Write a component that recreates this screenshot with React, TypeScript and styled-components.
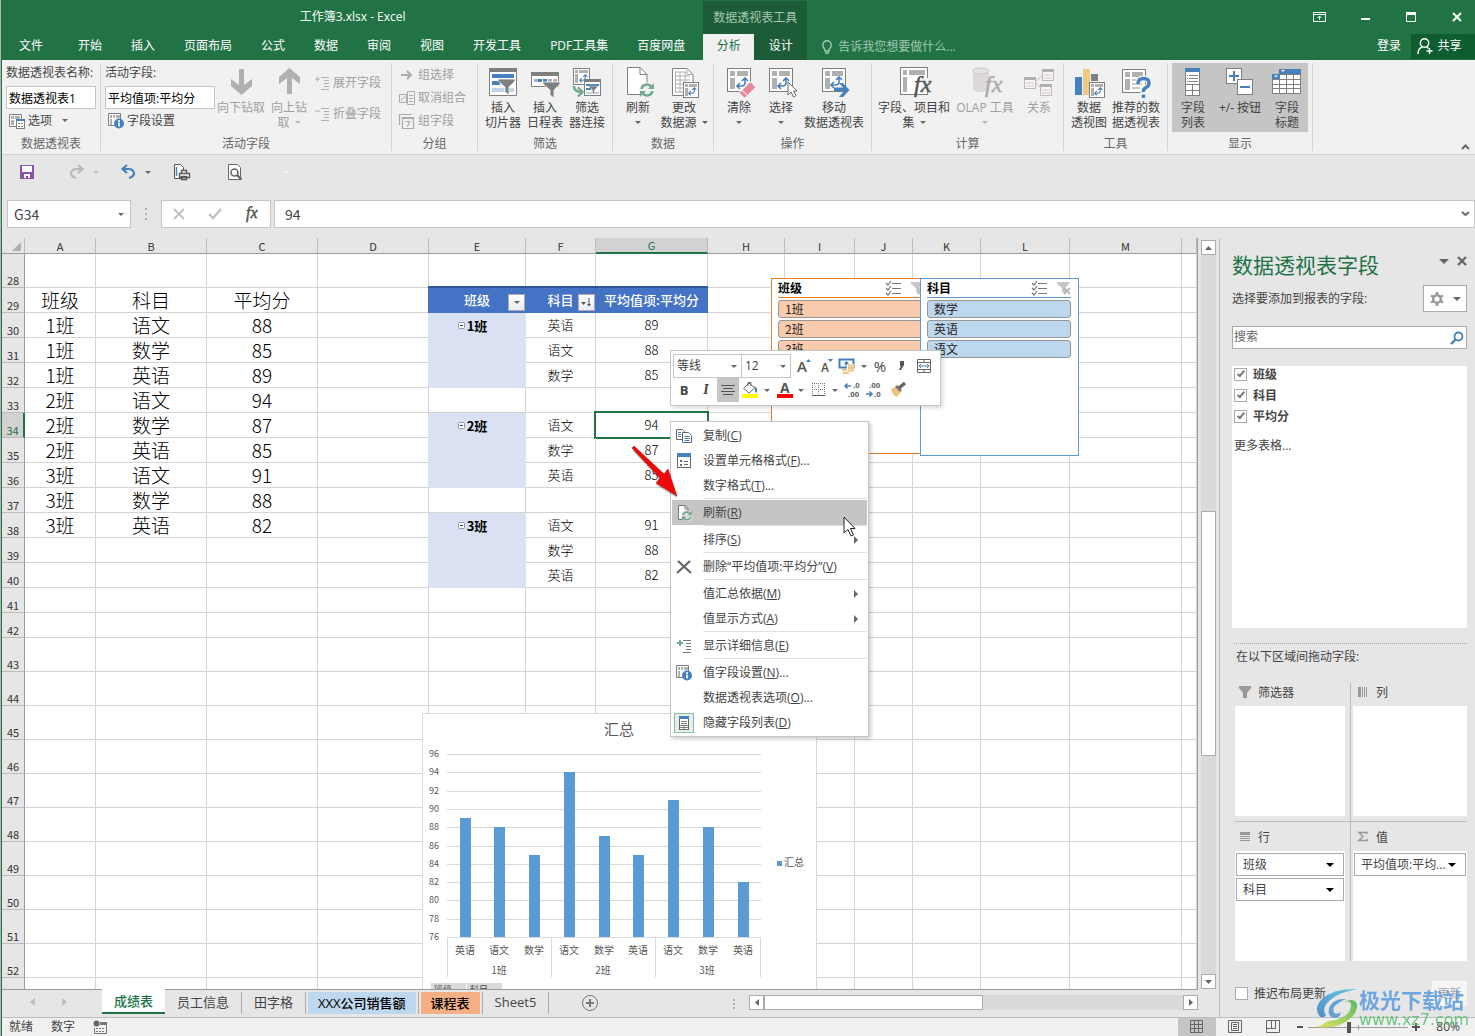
import React from "react";
import styled, { createGlobalStyle, css } from "styled-components";

const ui = `"Open Sans", "Noto Sans CJK SC", sans-serif`;
const cellFont = `"Noto Sans CJK SC", sans-serif`;

const GREEN = "#217346";
const GREY = "#7f7f7f";
const BLUE = "#4680bd";
const TEAL = "#72a98f";

const GlobalStyle = createGlobalStyle`
  *, *::before, *::after { box-sizing: border-box; }
  body { margin: 0; }
  button, input, select { font: inherit; color: inherit; margin: 0; padding: 0; border: 0; background: none; border-radius: 0; outline: none; }
  button { display: inline-flex; align-items: center; justify-content: center; cursor: default; white-space: nowrap; }
  svg { display: block; flex: none; overflow: visible; }
`;

const Window = styled.div`
  height: 100vh;
  display: flex;
  flex-direction: column;
  border-left: 1px solid #b4b4b4;
  padding-left: 1px;
  background: ${GREEN};
  font: 12px/16px ${ui};
  color: #444;
  overflow: hidden;
`;

const Caret = styled.span<{ $c?: string; $big?: boolean }>`
  display: inline-block;
  flex: none;
  width: 0;
  height: 0;
  border: ${(p) => (p.$big ? 5 : 3)}px solid transparent;
  border-top-color: ${(p) => p.$c || "#666"};
  border-bottom: 0;
`;

/* ---------- title bar and tabs ---------- */

const Header = styled.header`
  display: grid;
  grid-template-columns: max-content 104px 1fr;
  grid-template-rows: 34px 26px;
  flex: none;
  color: #fff;
`;
const Title = styled.div`
  display: flex;
  align-items: center;
  justify-content: center;
`;
const ContextTitle = styled.div`
  display: flex;
  align-items: center;
  justify-content: center;
  background: #1d5c38;
  color: #a6c7b4;
  border-top: 1px solid ${GREEN};
`;
const WindowControls = styled.div`
  display: flex;
  align-items: center;
  justify-content: flex-end;
`;
const WindowButton = styled.button`
  width: 46px;
  height: 32px;
  &:first-child { width: 56px; }
  &:last-child { width: 36px; padding-right: 1px; }
`;
const Tabs = styled.nav`
  display: flex;
  gap: 1px;
  padding-right: 4px;
`;
const Tab = styled.button<{ $file?: boolean }>`
  padding: 0 14px 3px;
  ${(p) => p.$file && css`width: 61px; padding: 0 3px 3px 0;`}
`;
const ContextTabs = styled.nav`
  display: flex;
  background: #1d5c38;
`;
const ContextTab = styled.button<{ $active?: boolean }>`
  width: ${(p) => (p.$active ? 51 : 53)}px;
  padding-bottom: 3px;
  background: ${(p) => (p.$active ? "#f1f1f1" : "none")};
  color: ${(p) => (p.$active ? GREEN : "#fff")};
`;
const HeaderEnd = styled.div`
  display: flex;
  align-items: stretch;
  justify-content: space-between;
`;
const TellMe = styled.button`
  gap: 6px;
  margin-left: 15px;
  color: #a6c7b4;
`;
const Account = styled.div`
  display: flex;
  align-items: stretch;
`;
const SignIn = styled.button`
  padding: 0 10px 3px;
`;
const Share = styled.button`
  width: 64px;
  height: 25px;
  gap: 4px;
  padding-right: 7px;
  padding-bottom: 2px;
  background: #0e5c2f;
`;

/* ---------- ribbon ---------- */

const Ribbon = styled.section`
  position: relative;
  display: flex;
  flex: none;
  height: 95px;
  padding-top: 3px;
  background: #f1f1f1;
  border-bottom: 1px solid #d2d2d2;
`;
const Group = styled.div<{ $w: number }>`
  width: ${(p) => p.$w}px;
  flex: none;
  height: 88px;
  display: flex;
  flex-direction: column;
  border-right: 1px solid #d4d4d4;
`;
const GroupBody = styled.div`
  display: flex;
  height: 73px;
  padding: 0 4px;
`;
const GroupLabel = styled.div`
  text-align: center;
  color: #666;
  line-height: 15px;
`;
const BigButton = styled.button<{ $w: number; $off?: boolean; $on?: boolean }>`
  width: ${(p) => p.$w}px;
  height: 69px;
  flex: none;
  flex-direction: column;
  justify-content: flex-start;
  padding-top: 3px;
  line-height: 15px;
  color: ${(p) => (p.$off ? "#a0a0a0" : "#444")};
  background: ${(p) => (p.$on ? "#c5c5c5" : "none")};
`;
const ButtonLine = styled.span`
  display: flex;
  align-items: center;
  justify-content: center;
  gap: 5px;
  height: 15px;
  &:first-of-type { margin-top: 2px; }
`;
const Stack = styled.div<{ $w: number; $drop?: boolean }>`
  width: ${(p) => p.$w}px;
  flex: none;
  display: flex;
  flex-direction: column;
  align-items: flex-start;
  ${(p) => p.$drop && "padding-top: 4px;"}
`;
const FieldLabel = styled.label`
  height: 20px;
  line-height: 20px;
  white-space: nowrap;
`;
const RibbonInput = styled.input`
  width: 100%;
  height: 23px;
  margin-top: 3px;
  padding: 0 2px;
  border: 1px solid #c6c6c6;
  background: #fff;
  color: #000;
`;
const SmallButton = styled.button<{ $off?: boolean; $tall?: boolean }>`
  height: ${(p) => (p.$tall ? 31 : 23)}px;
  gap: 3px;
  padding-left: 3px;
  color: ${(p) => (p.$off ? "#a0a0a0" : "#444")};
  ${Caret} { margin-left: 7px; }
`;
const Collapse = styled.button`
  position: absolute;
  right: 5px;
  bottom: 4px;
`;

/* ---------- quick access + formula bar ---------- */

const Quick = styled.div`
  display: flex;
  align-items: center;
  flex: none;
  height: 45px;
  padding: 0 0 11px 17px;
  background: #e6e6e6;
`;
const QuickButton = styled.button<{ $w: number }>`
  width: ${(p) => p.$w}px;
  justify-content: flex-start;
  gap: 8px;
`;
const FormulaBar = styled.div`
  display: flex;
  flex: none;
  height: 38px;
  padding: 0 0 10px 5px;
  background: #e6e6e6;
  font-size: 14px;
`;
const Boxed = styled.div<{ $w?: number }>`
  display: flex;
  align-items: center;
  ${(p) => (p.$w ? `width: ${p.$w}px;` : "flex: 1;")}
  border: 1px solid #c6c6c6;
  background: #fff;
`;
const NameInput = styled.input`
  flex: 1;
  min-width: 0;
  padding-left: 6px;
  font-family: ${cellFont};
`;
const FormulaInput = styled(NameInput)`
  padding-left: 10px;
`;
const EndButton = styled.button`
  width: 18px;
  height: 100%;
`;
const Dots = styled.div<{ $w: number }>`
  width: ${(p) => p.$w}px;
  flex: none;
  display: flex;
  align-items: center;
  justify-content: center;
`;
const FormulaTools = styled(Boxed)`
  justify-content: space-around;
  margin-right: 3px;
`;

/* ---------- worksheet ---------- */

const Main = styled.main`
  display: flex;
  flex: 1;
  min-height: 0;
  background: #e6e6e6;
`;
const Book = styled.div`
  display: flex;
  flex-direction: column;
  flex: 1;
  min-width: 0;
`;
const SheetRow = styled.div`
  display: flex;
  flex: 1;
  min-height: 0;
`;
const Viewport = styled.div`
  position: relative;
  flex: 1;
  min-width: 0;
  overflow: hidden;
  background: #fff;
  border-right: 1px solid #9b9b9b;
`;
const Sheet = styled.table`
  width: 100%;
  table-layout: fixed;
  border-collapse: separate;
  border-spacing: 0;
  font-family: ${cellFont};
  color: #000;
`;
const Col = styled.col<{ $w?: number }>`
  ${(p) => p.$w && `width: ${p.$w}px;`}
`;
const Tr = styled.tr<{ $h: number }>`
  height: ${(p) => p.$h}px;
`;
const ColHead = styled.th<{ $on?: boolean }>`
  height: 16px;
  padding: 0;
  font-size: 11px;
  line-height: 14px;
  font-weight: 400;
  background: ${(p) => (p.$on ? "#d2d2d2" : "#e6e6e6")};
  color: ${(p) => (p.$on ? GREEN : "#333")};
  border-right: 1px solid #bcbcbc;
  border-bottom: ${(p) => (p.$on ? `2px solid ${GREEN}` : "1px solid #9b9b9b")};
`;
const Corner = styled(ColHead)`
  > svg { margin: 2px 3px 0 auto; }
`;
const RowHead = styled.th<{ $on?: boolean }>`
  padding: 0;
  vertical-align: bottom;
  font-size: 11px;
  line-height: 13px;
  font-weight: 400;
  background: ${(p) => (p.$on ? "#d2d2d2" : "#e6e6e6")};
  color: ${(p) => (p.$on ? GREEN : "#333")};
  border-right: ${(p) => (p.$on ? `2px solid ${GREEN}` : "1px solid #9b9b9b")};
  border-bottom: 1px solid #bcbcbc;
`;
const Td = styled.td<{ $kind?: string; $fill?: string; $sel?: boolean }>`
  position: relative;
  padding: 0;
  text-align: center;
  white-space: nowrap;
  font-size: ${(p) => (p.$kind === "big" ? 19 : 13)}px;
  font-weight: 300;
  line-height: 22px;
  border-right: 1px solid #d4d4d4;
  border-bottom: 1px solid #d4d4d4;
  ${(p) =>
    p.$fill &&
    css`
      background: ${p.$fill};
      border-color: ${p.$fill};
      box-shadow: -1px 0 0 ${p.$fill};
    `}
  ${(p) => p.$kind === "bold" && css`font-weight: 700;`}
  ${(p) =>
    p.$kind === "head" &&
    css`
      color: #fff;
      font-weight: 500;
      box-shadow: -1px 0 0 ${p.$fill}, 0 -2px 0 #2f5597, -1px -2px 0 #2f5597;
    `}
  ${(p) =>
    p.$sel &&
    css`
      &::after { content: ""; position: absolute; inset: -2px; border: 2px solid ${GREEN}; }
    `}
`;
const Outline = styled.span`
  display: inline-flex;
  align-items: center;
  gap: 2px;
  padding-right: 9px;
`;
const FilterButton = styled.button`
  position: absolute;
  right: 0;
  bottom: 1px;
  width: 17px;
  height: 17px;
  border: 1px solid #ababab;
  background: linear-gradient(#fff, #e9ecf2);
`;

/* ---------- slicers ---------- */

const Slicer = styled.section<{ $x: number; $w: number; $h: number; $line: string }>`
  position: absolute;
  left: ${(p) => p.$x}px;
  top: 40px;
  width: ${(p) => p.$w}px;
  height: ${(p) => p.$h}px;
  padding: 0 7px 0 6px;
  border: 1px solid ${(p) => p.$line};
  background: #fff;
  color: #222;
  font-family: ${cellFont};
`;
const SlicerHead = styled.div<{ $line: string }>`
  display: flex;
  align-items: center;
  gap: 10px;
  height: 19px;
  padding-right: 1px;
  border-bottom: 1px solid ${(p) => p.$line};
  font-weight: 700;
  color: #000;
  > span { flex: 1; }
`;
const SlicerItem = styled.button<{ $fill: string }>`
  display: flex;
  width: 100%;
  height: 18px;
  justify-content: flex-start;
  margin-top: 2px;
  padding-left: 6px;
  border: 1px solid #969696;
  border-radius: 3px;
  background: ${(p) => p.$fill};
`;

/* ---------- chart ---------- */

const ChartBox = styled.figure`
  position: absolute;
  left: 420px;
  top: 475px;
  margin: 0;
  width: 395px;
  height: 300px;
  border: 1px solid #d9d9d9;
  background: #fff;
  font-family: ${cellFont};
`;
const ChartButtons = styled.div`
  position: absolute;
  left: 8px;
  top: 269px;
  display: flex;
  gap: 1px;
  font-size: 9px;
  line-height: 14px;
`;
const ChartButton = styled.button`
  width: 35px;
  height: 14px;
  gap: 5px;
  background: #d9d9d9;
`;

/* ---------- mini toolbar and menu ---------- */

const MiniBar = styled.div`
  position: absolute;
  left: 668px;
  top: 112px;
  width: 271px;
  height: 56px;
  padding: 3px 2px;
  border: 1px solid #c6c6c6;
  background: #fff;
  box-shadow: 2px 2px 4px rgba(0, 0, 0, 0.15);
`;
const MiniRow = styled.div`
  display: flex;
  height: 24px;
`;
const MiniSelectBox = styled.label<{ $w: number }>`
  display: flex;
  align-items: center;
  width: ${(p) => p.$w}px;
  padding-right: 4px;
  border: 1px solid #c6c6c6;
  & + & { border-left: 0; }
`;
const MiniSelect = styled.select`
  appearance: none;
  flex: 1;
  min-width: 0;
  padding-left: 3px;
`;
const MiniButton = styled.button<{ $w: number; $on?: boolean }>`
  width: ${(p) => p.$w}px;
  height: 24px;
  gap: 5px;
  font-size: 15px;
  background: ${(p) => (p.$on ? "#c5c5c5" : "none")};
`;
const Bold = styled.b`
  font-size: 13px;
`;
const Italic = styled.i`
  font: italic 700 14px/16px "Liberation Serif", serif;
`;

const Menu = styled.div`
  position: absolute;
  left: 668px;
  top: 183px;
  width: 199px;
  padding: 1px;
  border: 1px solid #c6c6c6;
  background: #fff;
  box-shadow: 2px 2px 4px rgba(0, 0, 0, 0.2);
`;
const MenuItem = styled.button<{ $on?: boolean }>`
  display: flex;
  width: 100%;
  height: 25px;
  justify-content: flex-start;
  background: ${(p) => (p.$on ? "#c5c5c5" : "none")};
  > span { flex: 1; text-align: left; }
  > svg:last-child { margin-right: 9px; }
`;
const MenuIcon = styled.i<{ $on?: boolean }>`
  display: flex;
  align-items: center;
  justify-content: center;
  width: 20px;
  height: 20px;
  margin: 0 9px 0 2px;
  ${(p) => p.$on && css`background: #e3f1e9; border: 1px solid #86bfa0;`}
`;
const MenuRule = styled.div`
  height: 2px;
  margin-left: 31px;
  border-top: 1px solid #e1e1e1;
`;
const Pointer = styled.svg<{ $x: number; $y: number }>`
  position: absolute;
  left: ${(p) => p.$x}px;
  top: ${(p) => p.$y}px;
`;

/* ---------- scroll bars ---------- */

const VScroll = styled.div`
  display: flex;
  flex-direction: column;
  width: 15px;
  margin: 2px 3px 0;
  background: #dadada;
`;
const ScrollButton = styled.button`
  width: 15px;
  height: 15px;
  flex: none;
  border: 1px solid #ababab;
  background: #fff;
`;
const Space = styled.div<{ $grow: number }>`
  flex: ${(p) => p.$grow};
`;
const VThumb = styled.div`
  flex: 245;
  border: 1px solid #ababab;
  background: #fff;
`;
const HScroll = styled.div`
  display: flex;
  width: 449px;
  height: 15px;
  margin-top: 5px;
  background: #dadada;
`;
const HThumb = styled.div`
  flex: 218;
  border: 1px solid #ababab;
  background: #fff;
`;

/* ---------- sheet tabs ---------- */

const TabBar = styled.div`
  display: flex;
  flex: none;
  height: 28px;
  margin-right: 21px;
  border-top: 1px solid #9b9b9b;
  font-size: 13px;
`;
const TabStrip = styled.div`
  display: flex;
  flex: 1;
`;
const TabNav = styled.div`
  display: flex;
  justify-content: space-around;
  width: 100px;
  padding: 0 22px 3px 14px;
`;
const SheetTab = styled.button<{ $active?: boolean; $fill?: string }>`
  height: 24px;
  padding: 0 12px;
  ${(p) =>
    p.$active &&
    css`
      height: 25px;
      margin-top: -1px;
      background: #fff;
      color: ${GREEN};
      border-bottom: 2px solid ${GREEN};
      font-weight: 500;
    `}
  ${(p) =>
    p.$fill &&
    css`
      height: 22px;
      margin: 2px 2px 0;
      padding: 0 10px;
      background: ${p.$fill};
      color: #000;
      font-weight: 500;
    `}
`;
const TabRule = styled.i`
  width: 1px;
  height: 22px;
  margin-top: 2px;
  background: #ababab;
`;
const AddSheet = styled.button`
  height: 26px;
  margin-left: 32px;
`;

/* ---------- field pane ---------- */

const Pane = styled.aside`
  display: flex;
  flex-direction: column;
  width: 256px;
  flex: none;
  padding: 12px 8px 11px 12px;
  border-left: 1px solid #bfbfbf;
  background: #e6e6e6;
`;
const PaneHead = styled.div`
  display: flex;
  align-items: center;
  height: 30px;
  > h2 { flex: 1; margin: 0; font-size: 21px; line-height: 30px; font-weight: 400; color: ${GREEN}; }
`;
const PaneButton = styled.button`
  height: 20px;
  margin: -8px 0 0 8px;
`;
const PaneSub = styled.div`
  display: flex;
  align-items: center;
  justify-content: space-between;
  margin-top: 5px;
`;
const GearButton = styled.button`
  width: 44px;
  height: 27px;
  gap: 9px;
  border: 1px solid #ababab;
  background: #fff;
  ${Caret} { border-width: 4px 4px 0; }
`;
const SearchBox = styled.label`
  display: flex;
  align-items: center;
  height: 23px;
  margin-top: 14px;
  padding-right: 2px;
  border: 1px solid #ababab;
  background: #fff;
`;
const SearchInput = styled.input`
  flex: 1;
  min-width: 0;
  padding: 0 0 2px 1px;
  &::placeholder { color: #666; opacity: 1; }
`;
const FieldList = styled.div`
  flex: 1;
  margin-top: 17px;
  padding: 0 2px;
  background: #fff;
`;
const CheckRow = styled.label<{ $bold?: boolean }>`
  display: flex;
  align-items: center;
  gap: 6px;
  height: ${(p) => (p.$bold ? 21 : 16)}px;
  padding-bottom: ${(p) => (p.$bold ? 4 : 0)}px;
  font-weight: ${(p) => (p.$bold ? 700 : 400)};
`;
const Check = styled.input`
  appearance: none;
  width: 13px;
  height: 13px;
  flex: none;
  border: 1px solid #ababab;
  background: #fff;
  &:checked::before {
    content: "";
    display: block;
    width: 4px;
    height: 8px;
    margin: 0 0 0 4px;
    border: solid #777;
    border-width: 0 2px 2px 0;
    transform: rotate(40deg);
  }
`;
const MoreTables = styled.a`
  display: block;
  margin-top: 9px;
  color: #444;
  text-decoration: none;
`;
const AreasTitle = styled.div`
  margin: 15px 0 0 2px;
  padding: 5px 0 0 2px;
  height: 40px;
  border-top: 1px dotted #ababab;
`;
const Areas = styled.div`
  display: grid;
  grid-template-columns: 116px 1fr;
  margin-left: 3px;
`;
const Area = styled.section<{ $right?: boolean; $low?: boolean }>`
  padding: ${(p) => (p.$low ? "6px" : "0")} ${(p) => (p.$right ? "0" : "5px")} ${(p) => (p.$low ? "0" : "5px")}
    ${(p) => (p.$right ? "2px" : "0")};
  ${(p) => !p.$right && "border-right: 1px solid #bcbcbc;"}
  ${(p) => !p.$low && "border-bottom: 1px solid #bcbcbc;"}
`;
const AreaHead = styled.div`
  display: flex;
  align-items: center;
  gap: 7px;
  height: 23px;
  padding: 0 0 6px 4px;
  > span { padding-top: 3px; }
`;
const AreaBox = styled.div`
  display: flex;
  flex-direction: column;
  gap: 2px;
  height: 110px;
  padding: 2px 1px;
  background: #fff;
`;
const AreaField = styled.button`
  width: 100%;
  height: 23px;
  justify-content: space-between;
  padding: 0 9px 0 6px;
  border: 1px solid #ababab;
  ${Caret} { border-width: 4px 4px 0; }
`;
const Defer = styled.div`
  display: flex;
  align-items: center;
  justify-content: space-between;
  height: 25px;
  margin: 20px 0 0 3px;
`;
const Update = styled.button`
  width: 35px;
  height: 25px;
  background: #f6f6f6;
  color: #a8a8a8;
`;

/* ---------- status bar ---------- */

const Status = styled.footer`
  display: flex;
  align-items: center;
  justify-content: space-between;
  flex: none;
  height: 19px;
  padding-left: 7px;
  background: #f1f1f1;
  border-top: 1px solid #bcbcbc;
`;
const StatusLeft = styled.div`
  display: flex;
  align-items: center;
  gap: 18px;
`;
const StatusRight = styled.div`
  display: flex;
  align-items: center;
  height: 100%;
  padding-right: 15px;
`;
const ViewButton = styled.button<{ $on?: boolean }>`
  width: 38px;
  height: 100%;
  background: ${(p) => (p.$on ? "#c5c5c5" : "none")};
`;
const ZoomButton = styled.button`
  width: 16px;
`;
const ZoomRange = styled.input`
  appearance: none;
  width: 100px;
  height: 12px;
  background: linear-gradient(#9b9b9b, #9b9b9b) center / 100% 1px no-repeat,
    linear-gradient(#9b9b9b, #9b9b9b) center / 1px 5px no-repeat;
  &::-webkit-slider-thumb {
    appearance: none;
    width: 4px;
    height: 11px;
    background: #555;
  }
`;
const ZoomLevel = styled.span`
  margin-left: 12px;
`;
const Watermark = styled.div`
  position: fixed;
  right: 9px;
  bottom: 7px;
  display: flex;
  align-items: center;
  gap: 1px;
  opacity: 0.85;
`;
const WatermarkText = styled.div`
  width: 107px;
  font: 700 21px/24px ${cellFont};
  color: #5a9bdc;
  white-space: nowrap;
  > small { display: block; font: 16px/18px "DejaVu Sans", sans-serif; color: #55c06e; }
`;

/* ---------- icon drawings ---------- */

const Arrows = ({ x = 0, y = 0, s = 1 }: { x?: number; y?: number; s?: number }) => (
  <g transform={`translate(${x} ${y}) scale(${s})`} fill="none" stroke={BLUE} strokeWidth={1.6}>
    <path d="M1 9h4.500Q9 9 9 5.500V1M4 6L1 9l3 3M6 4l3-3 3 3" />
  </g>
);
const Frame = ({ x, y, off }: { x: number; y: number; off?: boolean }) => (
  <g transform={`translate(${x} ${y})`}>
    <rect x=".5" y=".5" width="23" height="23" fill="#fff" stroke={off ? "#b9b9b9" : GREY} />
    <path fill="#b0b0b0" d="M3 3h5v5H3zM10 3h11v5H10zM3 10h5v11H3z" />
  </g>
);
const Funnel = ({ x, y, s = 1 }: { x: number; y: number; s?: number }) => (
  <path transform={`translate(${x} ${y}) scale(${s})`} d="M0 0h17v2l-6 6v8l-4-3V8L0 2z" fill={GREY} stroke="#f6f6f6" strokeWidth=".8" />
);
const Refresh = ({ x, y, s = 1 }: { x: number; y: number; s?: number }) => (
  <g transform={`translate(${x} ${y}) scale(${s})`} fill="none" stroke={TEAL} strokeWidth="2.400">
    <path d="M1.500 6A5.500 5.500 0 0 1 11.500 4M12.500 8A5.500 5.500 0 0 1 2.500 10" />
    <path d="M14 0v6H8zM0 14V8h6z" fill={TEAL} stroke="none" />
  </g>
);
const Fx = ({ x, y, size, c = "#555" }: { x: number; y: number; size: number; c?: string }) => (
  <text x={x} y={y} fontFamily="Liberation Serif, serif" fontStyle="italic" fontSize={size} fill={c} stroke={c} strokeWidth=".5">
    fx
  </text>
);

const Big = ({ children }: { children: React.ReactNode }) => (
  <svg width="32" height="32" viewBox="0 0 32 32" aria-hidden="true">{children}</svg>
);

const bigIcons: Record<string, React.ReactNode> = {
  down: <Big><path d="M14 3h5v16l8-6v7L16.500 29 6 20v-7l8 6z" fill="#b0b0b0" /></Big>,
  up: <Big><path d="M14 28h5V12l8 6v-7L16.500 2 6 11v7l8-6z" fill="#b0b0b0" /></Big>,
  slicer: (
    <Big>
      <path d="M2.500 2.500h27v27h-27z" fill="#fff" stroke={GREY} />
      <path d="M2 2h28v4H2z" fill={GREY} />
      <path d="M5 8h22v4H5zM5 15h8v4H5z" fill={BLUE} />
      <path d="M5 22h22v4H5z" fill="#c0d3ea" />
      <Funnel x={11} y={13} />
    </Big>
  ),
  timeline: (
    <Big>
      <path d="M2.500 6.500h27v14h-27z" fill="#fff" stroke={GREY} />
      <path d="M2 6h28v4H2z" fill={GREY} />
      <path d="M5 13h4v3H5zM19 13h4v3h-4zM24 13h4v3h-4z" fill="#b0b0b0" />
      <path d="M9 13h4v3H9zM14 13h4v3h-4z" fill={BLUE} />
      <Funnel x={14} y={16} />
    </Big>
  ),
  connect: (
    <Big>
      <rect x="2.500" y="2.500" width="16" height="16" fill="#fff" stroke={GREY} />
      <path d="M4 4h3v3H4zM8 4h9v3H8zM4 8h3v9H4z" fill="#b0b0b0" />
      <Arrows x={8} y={8} s={0.7} />
      <rect x="13.500" y="13.500" width="16" height="16" fill="#fff" stroke={GREY} />
      <path d="M13 13h17v3H13z" fill={GREY} />
      <path d="M15 18h13v2H15zM15 22h5v2h-5z" fill={BLUE} />
      <path d="M15 26h13v2H15z" fill="#c0d3ea" />
      <Funnel x={18} y={20} s={0.5} />
      <path d="M3 20q0 6 7 6M7 21.500l4.500 4.500L7 30.500" fill="none" stroke={TEAL} strokeWidth="2.400" />
    </Big>
  ),
  refresh: (
    <Big>
      <path d="M5.500 1.500H18l7 7v20H5.500z" fill="#fff" stroke={GREY} />
      <path d="M18 1.500v7h7" fill="none" stroke={GREY} />
      <circle cx="25" cy="24" r="8" fill="#f1f1f1" />
      <Refresh x={18} y={17} />
    </Big>
  ),
  source: (
    <Big>
      <path d="M4.500 2.500H19l6 6v21H4.500z" fill="#fff" stroke={GREY} />
      <path d="M19 2.500v6h6M7 6h11M7 10h15M7 14h15M7 18h15M7 22h15M7 26h15M7.500 6v20M12 6v20M17 6v20" fill="none" stroke="#b0b0b0" />
      <rect x="15.500" y="16.500" width="15" height="15" fill="#fff" stroke={GREY} />
      <path d="M17 18h3v3h-3zM21 18h8v3h-8zM17 22h3v8h-3z" fill="#b0b0b0" />
      <Arrows x={20} y={21} s={0.7} />
    </Big>
  ),
  clear: (
    <Big>
      <Frame x={4} y={2} />
      <Arrows x={13} y={11} />
      <g transform="translate(24.500 24) rotate(-45)">
        <rect x="-8" y="-4" width="16" height="8" rx="1" fill="#e8879a" stroke="#f1f1f1" />
        <path d="M-4-4v8" stroke="#fff" />
      </g>
    </Big>
  ),
  select: (
    <Big>
      <Frame x={4} y={2} />
      <Arrows x={12} y={11} />
      <path d="M23 16v13l3-3 2.500 5 2.500-1.500L28.500 25H32z" fill="#fff" stroke="#666" />
    </Big>
  ),
  move: (
    <Big>
      <Frame x={4} y={2} />
      <Arrows x={12} y={10} />
      <path d="M16 23.500h12" stroke={BLUE} strokeWidth="4" />
      <path d="M21 17h4l6.500 7-6.500 7h-4l6-7z" fill={BLUE} />
    </Big>
  ),
  fields: (
    <Big>
      <rect x="2.500" y="1.500" width="27" height="27" fill="#fff" stroke={GREY} />
      <path fill="#b0b0b0" d="M5 4h4v5H5zM11 4h16v5H11zM5 11h4v15H5z" />
      <path d="M23 12h8v14h-8z" fill="#f1f1f1" />
      <Fx x={16} y={26} size={24} />
    </Big>
  ),
  olap: (
    <Big>
      <path d="M4 5v18q0 3 8 3t8-3V5z" fill="#dcd8dc" />
      <ellipse cx="12" cy="5" rx="8" ry="3" fill="#e6e2e6" stroke="#cbc7cb" />
      <Fx x={16} y={26} size={24} c="#ababab" />
    </Big>
  ),
  relation: (
    <Big>
      <path d="M12 16l10-9M12 16l8 8" stroke="#b9b9b9" fill="none" />
      <g fill="#f8f4f8" stroke="#b9b9b9">
        <path d="M19.500 3.500h11v11h-11zM1.500 11.500h11v11h-11zM17.500 18.500h11v11h-11z" />
      </g>
      <path d="M19 3h12v3H19zM1 11h12v3H1zM17 18h12v3H17z" fill="#b0b0b0" />
      <path d="M21 9h8M21 12h8M3 17h8M3 20h8M19 24h8M19 27h8" stroke="#d0c8d0" />
    </Big>
  ),
  chart: (
    <Big>
      <path d="M2 11h7v18H2z" fill={BLUE} />
      <path d="M10 3h7v26h-7z" fill="#efc980" />
      <path d="M18 8h7v7h-7z" fill={GREY} />
      <rect x="16.500" y="16.500" width="15" height="15" fill="#fff" stroke={GREY} />
      <path d="M18 18h3v3h-3zM22 18h8v3h-8zM18 22h3v8h-3z" fill="#b0b0b0" />
      <Arrows x={21} y={21} s={0.7} />
    </Big>
  ),
  suggest: (
    <Big>
      <Frame x={2} y={3} />
      <path d="M12 14h10M12 18h10M12 22h8" stroke="#c8c8c8" strokeWidth="2" />
      <path d="M18 18q0-5.500 5.500-5.500T29 17q0 3-3 4.500T23.500 26v6" fill="none" stroke="#f6f6f6" strokeWidth="6" />
      <path d="M18 18q0-5.500 5.500-5.500T29 17q0 3-3 4.500T23.500 26M23.500 28.500v3.500" fill="none" stroke={BLUE} strokeWidth="3.400" />
    </Big>
  ),
  list: (
    <Big>
      <rect x="8.500" y="2.500" width="14" height="27" fill="#fff" stroke={GREY} />
      <path d="M8 2h15v4H8z" fill={BLUE} />
      <path d="M10 9.500h1M12 9.500h9M10 12.500h1M12 12.500h9M10 15.500h1M12 15.500h9M9 18.500h13M9 24.500h13M15.500 18v11" stroke={GREY} />
    </Big>
  ),
  plusminus: (
    <Big>
      <rect x="2.500" y="2.500" width="15" height="15" fill="#fff" stroke={GREY} />
      <rect x="13.500" y="13.500" width="15" height="15" fill="#fff" stroke={GREY} />
      <path d="M5 10h10M10 5v10M16 21h10" stroke={BLUE} strokeWidth="2" />
    </Big>
  ),
  headers: (
    <Big>
      <path d="M1.500 8.500h28v19h-28z" fill="#fff" stroke={GREY} />
      <path d="M8 3h22v5H8zM1 8h8v5H1z" fill={BLUE} />
      <path d="M8.500 13v14M15.500 8v19M22.500 8v19M2 13.500h27M2 18.500h27M2 22.500h27" stroke={GREY} />
      <path d="M10 4h4l-2 2zM3 9.500h4l-2 2z" fill="#fff" />
    </Big>
  ),
};

const Sm = ({ w = 16, h = 16, children }: { w?: number; h?: number; children: React.ReactNode }) => (
  <svg width={w} height={h} viewBox={`0 0 ${w} ${h}`} aria-hidden="true">{children}</svg>
);
const smallIcons: Record<string, React.ReactNode> = {
  options: (
    <Sm>
      <path d="M.5 1.500h12v12H.5z" fill="#fff" stroke={GREY} />
      <path d="M2 3h3v3H2zM6 3h5v3H6zM2 7h3v5H2z" fill="#b0b0b0" />
      <rect x="7.500" y="6.500" width="8" height="9" fill="#fff" stroke={GREY} />
      <path d="M7 6h9v2H7z" fill={BLUE} />
      <path d="M9 10.500h2M12 10.500h2M9 13.500h2M12 13.500h2" stroke={GREY} />
    </Sm>
  ),
  settings: (
    <Sm>
      <path d="M.5.5h12v12H.5z" fill="#fff" stroke={GREY} />
      <path d="M2 2h2v3H2zM5 2h2v3H5zM8 2h4v3H8zM2 6h2v6H2z" fill="#b0b0b0" />
      <circle cx="11" cy="10.500" r="5" fill={BLUE} />
      <path d="M11 7v2M11 9.500v4" stroke="#fff" strokeWidth="1.600" />
    </Sm>
  ),
  expand: <Sm><path d="M1 4h5M3.500 1.500v5M7 2.500h8M10 5.500h5M10 8.500h5M10 11.500h5M7 14.500h8" stroke="#b0b0b0" /></Sm>,
  collapse: <Sm><path d="M1 5h5M7 2.500h8M10 5.500h5M10 8.500h5M10 11.500h5M7 14.500h8" stroke="#b0b0b0" /></Sm>,
  arrow: <Sm><path d="M2 8h10M8 4l4 4-4 4" fill="none" stroke="#ababab" strokeWidth="2" /></Sm>,
  ungroup: <Sm><path d="M.5 4.500h7v8h-7zM8.500 1.500h7v13h-7zM2 11l4-5M10 5.500h4M10 8.500h4M10 11.500h4" fill="none" stroke="#ababab" /></Sm>,
  groupfield: (
    <Sm>
      <path d="M.5 12V1.500h12M3.500 4.500h11v11h-11zM3 5.500h12M6.500 8.500h4l-2 5" fill="none" stroke="#ababab" strokeWidth="1.200" />
    </Sm>
  ),
  copy: (
    <Sm>
      <path d="M.5 1.500h6l2 2v8h-8z" fill="#fff" stroke="#666" />
      <path d="M6.500 4.500h6l3 3v7h-9z" fill="#fff" stroke="#666" />
      <path d="M2 4.500h3M2 6.500h3M2 8.500h3M8.500 8.500h5M8.500 10.500h5M8.500 12.500h5" stroke={BLUE} />
    </Sm>
  ),
  format: (
    <Sm>
      <rect x="1.500" y="1.500" width="13" height="13" fill="#fff" stroke="#666" />
      <path d="M1 0h14v4H1z" fill={BLUE} />
      <path d="M4 7h2v2H4zM4 11h2v2H4z" fill="#666" />
      <path d="M8 8.500h4M8 11.500h4" stroke="#666" />
    </Sm>
  ),
  refresh: (
    <Sm>
      <path d="M2.500.5H9l3 3v11H2.500z" fill="#fff" stroke="#777" />
      <path d="M9 .5v3.500h3" fill="none" stroke="#777" />
      <circle cx="11" cy="11" r="5.500" fill="#dedede" />
      <Refresh x={6} y={6} s={0.7} />
    </Sm>
  ),
  del: <Sm><path d="M2 2l13 12M14 2L1 14" stroke="#666" strokeWidth="2.200" /></Sm>,
  detail: (
    <Sm>
      <path d="M1 5h6M4 2v6" stroke={TEAL} strokeWidth="2" />
      <path d="M7 2.500h8M10 5.500h5M10 8.500h5M10 11.500h5M7 14.500h8" stroke="#777" />
    </Sm>
  ),
  pane: (
    <Sm>
      <rect x="3.500" y="1.500" width="9" height="13" fill="#fff" stroke="#666" />
      <path d="M3 1h10v3H3z" fill={BLUE} />
      <path d="M5 6.500h6M5 8.500h6M4 10.500h8M8 11v4M4 12.500h8" stroke={GREY} />
    </Sm>
  ),
};

/* ---------- data ---------- */

type BigDef = { icon: string; w: number; lines: string[]; caret?: number; off?: boolean; on?: boolean };
const groups: { label: string; w: number; items: BigDef[] }[] = [
  {
    label: "筛选", w: 135, items: [
      { icon: "slicer", w: 42, lines: ["插入", "切片器"] },
      { icon: "timeline", w: 42, lines: ["插入", "日程表"] },
      { icon: "connect", w: 42, lines: ["筛选", "器连接"] },
    ],
  },
  {
    label: "数据", w: 101, items: [
      { icon: "refresh", w: 42, lines: ["刷新", ""], caret: 1 },
      { icon: "source", w: 50, lines: ["更改", "数据源"], caret: 1 },
    ],
  },
  {
    label: "操作", w: 158, items: [
      { icon: "clear", w: 42, lines: ["清除", ""], caret: 1 },
      { icon: "select", w: 42, lines: ["选择", ""], caret: 1 },
      { icon: "move", w: 64, lines: ["移动", "数据透视表"] },
    ],
  },
  {
    label: "计算", w: 192, items: [
      { icon: "fields", w: 76, lines: ["字段、项目和", "集"], caret: 1 },
      { icon: "olap", w: 66, lines: ["OLAP 工具", ""], caret: 1, off: true },
      { icon: "relation", w: 42, lines: ["关系"], off: true },
    ],
  },
  {
    label: "工具", w: 104, items: [
      { icon: "chart", w: 42, lines: ["数据", "透视图"] },
      { icon: "suggest", w: 52, lines: ["推荐的数", "据透视表"] },
    ],
  },
  {
    label: "显示", w: 145, items: [
      { icon: "list", w: 42, lines: ["字段", "列表"], on: true },
      { icon: "plusminus", w: 52, lines: ["+/- 按钮"], on: true },
      { icon: "headers", w: 42, lines: ["字段", "标题"], on: true },
    ],
  },
];

const Command = ({ icon, w, lines, caret, off, on }: BigDef) => (
  <BigButton $w={w} $off={off} $on={on} disabled={off} aria-pressed={on}>
    {bigIcons[icon]}
    {lines.map((t, i) => (
      <ButtonLine key={i}>
        {t}
        {caret === i && <Caret $c={off ? "#b9b9b9" : undefined} />}
      </ButtonLine>
    ))}
  </BigButton>
);

const mainTabs = ["开始", "插入", "页面布局", "公式", "数据", "审阅", "视图", "开发工具", "PDF工具集", "百度网盘"];

const columns: [string, number?][] = [
  ["A", 71], ["B", 111], ["C", 111], ["D", 111], ["E", 97], ["F", 70], ["G", 112],
  ["H", 77], ["I", 70], ["J", 58], ["K", 68], ["L", 89], ["M", 112], [""],
];

const source: Record<number, string[]> = {
  29: ["班级", "科目", "平均分"], 30: ["1班", "语文", "88"], 31: ["1班", "数学", "85"],
  32: ["1班", "英语", "89"], 33: ["2班", "语文", "94"], 34: ["2班", "数学", "87"],
  35: ["2班", "英语", "85"], 36: ["3班", "语文", "91"], 37: ["3班", "数学", "88"], 38: ["3班", "英语", "82"],
};
const pivot: Record<number, string[]> = {
  29: ["班级", "科目", "平均值项:平均分"],
  30: ["1班", "英语", "89"], 31: ["", "语文", "88"], 32: ["", "数学", "85"],
  34: ["2班", "语文", "94"], 35: ["", "数学", "87"], 36: ["", "英语", "85"],
  38: ["3班", "语文", "91"], 39: ["", "数学", "88"], 40: ["", "英语", "82"],
};
const rows = Array.from({ length: 26 }, (_, i) => 28 + i);

const Cell = ({ row, col }: { row: number; col: number }) => {
  if (col < 3) return <Td $kind="big">{source[row]?.[col]}</Td>;
  const p = pivot[row];
  if (col >= 4 && col <= 6 && p) {
    const text = p[col - 4];
    if (row === 29)
      return (
        <Td $kind="head" $fill="#4472c4">
          {text}
          {col < 6 && (
            <FilterButton aria-label={`筛选 ${text}`}>
              {col === 4 ? <Caret /> : (
                <Sm w={11} h={9}><path d="M0 4h5L2.500 7zM7.500 0h1v8h-1zM6 6h4L8 8.500z" fill="#555" /></Sm>
              )}
            </FilterButton>
          )}
        </Td>
      );
    if (col === 4)
      return (
        <Td $kind="bold" $fill="#d9e1f2">
          {text && (
            <Outline>
              <Sm w={7} h={7}><rect x=".5" y=".5" width="6" height="6" rx="1" fill="#fff" stroke="#8a98b5" /><path d="M2 3.500h3" stroke="#334" /></Sm>
              {text}
            </Outline>
          )}
        </Td>
      );
    return <Td $sel={row === 34 && col === 6}>{text}</Td>;
  }
  return <Td />;
};

const values: [string, number][] = [
  ["英语", 89], ["语文", 88], ["数学", 85], ["语文", 94], ["数学", 87], ["英语", 85], ["语文", 91], ["数学", 88], ["英语", 82],
];
const yOf = (v: number) => Math.round(223 - ((v - 76) * 183) / 20);

const Chart = () => (
  <ChartBox>
    <svg width="393" height="268" viewBox="0 0 393 268" role="img" aria-label="汇总" fill="#595959" textAnchor="middle">
      <text x="196" y="21" fontSize="15">汇总</text>
      {Array.from({ length: 11 }, (_, i) => 76 + i * 2).map((v) => (
        <g key={v}>
          <path d={`M24 ${yOf(v) + 0.5}h314`} stroke="#d9d9d9" />
          <text x="11" y={yOf(v) + 3} fontSize="9">{v}</text>
        </g>
      ))}
      {values.map(([name, v], i) => {
        const cx = Math.round(41.500 + i * 34.750);
        return (
          <g key={i}>
            <rect x={cx - 5} y={yOf(v)} width="11" height={223 - yOf(v)} fill="#5b9bd5" />
            <text x={cx} y="240" fontSize="10">{name}</text>
          </g>
        );
      })}
      {["1班", "2班", "3班"].map((t, i) => (
        <text key={t} x={76 + i * 104} y="260" fontSize="10">{t}</text>
      ))}
      <path d="M24.500 224v39M128.500 224v39M232.500 224v39M337.500 224v39" stroke="#d9d9d9" />
      <rect x="354" y="147" width="5" height="5" fill="#5b9bd5" />
      <text x="371" y="152" fontSize="10">汇总</text>
    </svg>
    <ChartButtons>
      <ChartButton>班级<Caret /></ChartButton>
      <ChartButton>科目<Caret /></ChartButton>
    </ChartButtons>
  </ChartBox>
);

const SlicerCard = ({ x, w, h, line, fill, title, items }: { x: number; w: number; h: number; line: string; fill: string; title: string; items: string[] }) => (
  <Slicer $x={x} $w={w} $h={h} $line={line}>
    <SlicerHead $line={line}>
      <span>{title}</span>
      <Sm w={16} h={14}><path d="M7 2.500h9M7 7.500h9M7 12.500h9M1 2l2 2 3-4M1 7l2 2 3-4M1 12l2 2 3-4" fill="none" stroke="#777" strokeWidth="1.200" /></Sm>
      <Sm w={13} h={14}>
        <path d="M0 1h12v2L8 7v6L5 11V7L0 3z" fill="#c9c5c9" />
        <path d="M7 7l6 6M13 7l-6 6" stroke="#b9b5b9" strokeWidth="1.800" />
      </Sm>
    </SlicerHead>
    {items.map((t) => <SlicerItem key={t} $fill={fill}>{t}</SlicerItem>)}
  </Slicer>
);

type MenuDef = { icon?: string; text: string; key: string; tail?: string; sub?: boolean; on?: boolean; lit?: boolean } | null;
const menu: MenuDef[] = [
  { icon: "copy", text: "复制", key: "C" },
  { icon: "format", text: "设置单元格格式", key: "F", tail: "..." },
  { text: "数字格式", key: "T", tail: "..." },
  null,
  { icon: "refresh", text: "刷新", key: "R", on: true },
  null,
  { text: "排序", key: "S", sub: true },
  null,
  { icon: "del", text: "删除“平均值项:平均分”", key: "V" },
  null,
  { text: "值汇总依据", key: "M", sub: true },
  { text: "值显示方式", key: "A", sub: true },
  null,
  { icon: "detail", text: "显示详细信息", key: "E" },
  null,
  { icon: "settings", text: "值字段设置", key: "N", tail: "..." },
  { text: "数据透视表选项", key: "O", tail: "..." },
  { icon: "pane", text: "隐藏字段列表", key: "D", lit: true },
];

const Decimal = ({ x, y, children }: { x: number; y: number; children: string }) => (
  <text x={x} y={y} fontFamily="Liberation Sans, sans-serif" fontSize="8" fontWeight="700" fill="#555">{children}</text>
);

const MiniToolbar = () => (
  <MiniBar>
    <MiniRow>
      <MiniSelectBox $w={69}><MiniSelect aria-label="字体"><option>等线</option></MiniSelect><Caret /></MiniSelectBox>
      <MiniSelectBox $w={49}><MiniSelect aria-label="字号"><option>12</option></MiniSelect><Caret /></MiniSelectBox>
      <MiniButton $w={26} aria-label="增大字号"><Sm><text x="1" y="14" fontSize="15" fontWeight="600" fill="#555">A</text><path d="M10 4h5l-2.500-3z" fill={BLUE} /></Sm></MiniButton>
      <MiniButton $w={20} aria-label="减小字号"><Sm><text x="2" y="14" fontSize="12" fontWeight="600" fill="#555">A</text><path d="M9 1h5l-2.500 3z" fill={BLUE} /></Sm></MiniButton>
      <MiniButton $w={30} aria-label="会计数字格式">
        <Sm w={18} h={16}>
          <path d="M1.500 1.500h14v8h-14z" fill="#fff" stroke={BLUE} strokeWidth="2" />
          <circle cx="8.500" cy="5.500" r="2" fill={BLUE} />
          <path d="M9 6h7v9H5v-3h4z" fill="#fff" />
          <path d="M10 7.500h6M10 10h6M10 12.500h6M4 12h5M5 15h6" stroke="#efc47a" strokeWidth="1.800" />
        </Sm>
        <Caret />
      </MiniButton>
      <MiniButton $w={26} aria-label="百分比">%</MiniButton>
      <MiniButton $w={18} aria-label="千位分隔"><Sm w={6} h={16}><path d="M1 3h4v4L2 12H0l2-4H1z" fill="#555" /></Sm></MiniButton>
      <MiniButton $w={26} aria-label="合并后居中">
        <Sm>
          <path d="M1.500 1.500h13v13h-13zM1 4.500h14M1 11.500h14M8 1v3M8 12v3" fill="none" stroke="#666" />
          <path d="M3 8h10M5 6L3 8l2 2M11 6l2 2-2 2" fill="none" stroke={BLUE} />
        </Sm>
      </MiniButton>
    </MiniRow>
    <MiniRow>
      <MiniButton $w={22}><Bold>B</Bold></MiniButton>
      <MiniButton $w={22}><Italic>I</Italic></MiniButton>
      <MiniButton $w={22} $on aria-label="居中"><Sm w={14} h={12}><path d="M0 1.500h14M2 4.500h10M0 7.500h14M2 10.500h10" stroke="#555" /></Sm></MiniButton>
      <MiniButton $w={34} aria-label="填充颜色">
        <Sm w={17}>
          <path d="M7 1L1.500 6.500 7 11l5.500-5zM6 4V.5h3V4" fill="#fff" stroke="#666" />
          <path d="M12 4q4 1 3 7-3-1-2-5z" fill={BLUE} />
          <path d="M0 12h16v4H0z" fill="#ff0" />
        </Sm>
        <Caret />
      </MiniButton>
      <MiniButton $w={34} aria-label="字体颜色"><Sm><text x="3" y="11" fontSize="14" fontWeight="700" fill="#555">A</text><path d="M0 12h16v4H0z" fill="#f00" /></Sm><Caret /></MiniButton>
      <MiniButton $w={34} aria-label="边框">
        <Sm><path d="M1 1.500h13M1 7.500h13M1.500 1v12M7.500 1v12M13.500 1v12" stroke="#777" strokeDasharray="1 1" /><path d="M1 13.500h13" stroke="#555" /></Sm>
        <Caret />
      </MiniButton>
      <MiniButton $w={22} aria-label="增加小数位数">
        <Sm><Decimal x={9} y={6}>.0</Decimal><Decimal x={4} y={15}>.00</Decimal><path d="M1 4h6M3.500 1.500L1 4l2.500 2.500" fill="none" stroke={BLUE} strokeWidth="1.500" /></Sm>
      </MiniButton>
      <MiniButton $w={22} aria-label="减少小数位数">
        <Sm><Decimal x={3} y={6}>.00</Decimal><Decimal x={8} y={15}>.0</Decimal><path d="M0 12h6M3.500 9.500L6 12l-2.500 2.500" fill="none" stroke={BLUE} strokeWidth="1.500" /></Sm>
      </MiniButton>
      <MiniButton $w={26} aria-label="格式刷">
        <Sm><path d="M1 7l4-2 6 5-4 5q-4-1-6-8z" fill="#efc47a" /><path d="M5 5l2-2 5 5-2 2z" fill="#777" /><path d="M9 6l6-5" stroke="#666" strokeWidth="3.500" /></Sm>
      </MiniButton>
    </MiniRow>
  </MiniBar>
);

const ContextMenu = () => (
  <Menu role="menu">
    {menu.map((m, i) =>
      m ? (
        <MenuItem key={i} role="menuitem" $on={m.on}>
          <MenuIcon $on={m.lit}>{m.icon && smallIcons[m.icon]}</MenuIcon>
          <span>{m.text}(<u>{m.key}</u>){m.tail}</span>
          {m.sub && <Sm w={4} h={8}><path d="M0 0l4 4-4 4z" fill="#666" /></Sm>}
        </MenuItem>
      ) : (
        <MenuRule key={i} />
      )
    )}
  </Menu>
);

const Worksheet = () => (
  <Viewport>
    <Sheet>
      <colgroup>
        <Col $w={23} />
        {columns.map(([n, w]) => <Col key={n} $w={w} />)}
      </colgroup>
      <thead>
        <tr>
          <Corner><Sm w={9} h={9}><path d="M9 0v9H0z" fill="#b0b0b0" /></Sm></Corner>
          {columns.map(([n]) => <ColHead key={n} $on={n === "G"}>{n}</ColHead>)}
        </tr>
      </thead>
      <tbody>
        {rows.map((r) => (
          <Tr key={r} $h={r > 28 && r < 43 ? 25 : 34}>
            <RowHead $on={r === 34}>{r < 53 && r}</RowHead>
            {columns.map(([n], c) => <Cell key={n} row={r} col={c} />)}
          </Tr>
        ))}
      </tbody>
    </Sheet>
    <SlicerCard x={769} w={162} h={176} line="#ed7d31" fill="#f8cbad" title="班级" items={["1班", "2班", "3班"]} />
    <SlicerCard x={918} w={159} h={178} line="#5b9bd5" fill="#bdd7ee" title="科目" items={["数学", "英语", "语文"]} />
    <Chart />
    <MiniToolbar />
    <ContextMenu />
    <Pointer $x={626} $y={204} width="54" height="60" viewBox="0 0 54 60" aria-hidden="true">
      <path d="M5 9l2-2 29 28 4-4 9 25-21-13 4-5z" fill="#000" opacity=".25" />
      <path d="M4 6l2-2 30 28 4-5 9 27-21-13 4-5z" fill="#f00808" stroke="#a00" strokeWidth=".5" />
    </Pointer>
    <Pointer $x={841} $y={278} width="14" height="22" viewBox="0 0 14 22" aria-hidden="true">
      <path d="M1 1v16l4-3.500 3 6.500 2.500-1-3-6.500H12z" fill="#fff" stroke="#222" />
    </Pointer>
  </Viewport>
);

const AreaPanel = ({ icon, title, fields, right, low }: { icon: React.ReactNode; title: string; fields: string[]; right?: boolean; low?: boolean }) => (
  <Area $right={right} $low={low}>
    <AreaHead>{icon}<span>{title}</span></AreaHead>
    <AreaBox>
      {fields.map((f) => <AreaField key={f}>{f}<Caret $c="#000" /></AreaField>)}
    </AreaBox>
  </Area>
);

const FieldPane = () => (
  <Pane>
    <PaneHead>
      <h2>数据透视表字段</h2>
      <PaneButton aria-label="任务窗格选项"><Caret $big /></PaneButton>
      <PaneButton aria-label="关闭"><Sm w={10} h={10}><path d="M1 1l8 8M9 1L1 9" stroke="#666" strokeWidth="2.400" /></Sm></PaneButton>
    </PaneHead>
    <PaneSub>
      <span>选择要添加到报表的字段:</span>
      <GearButton aria-label="工具">
        <Sm w={14} h={14}><circle cx="7" cy="7" r="3.800" fill="none" stroke="#999" strokeWidth="2.400" /><path d="M7 0v3M7 11v3M1 3.500l2.500 1.500M10.500 9L13 10.500M1 10.500L3.500 9M10.500 5L13 3.500" stroke="#999" strokeWidth="2.600" /></Sm>
        <Caret />
      </GearButton>
    </PaneSub>
    <SearchBox>
      <SearchInput placeholder="搜索" aria-label="搜索" />
      <Sm w={14} h={14}><circle cx="8.500" cy="5.500" r="4" fill="none" stroke={BLUE} strokeWidth="1.800" /><path d="M5.500 8.500L1 13" stroke={BLUE} strokeWidth="2.400" /></Sm>
    </SearchBox>
    <FieldList>
      {["班级", "科目", "平均分"].map((f) => (
        <CheckRow key={f} $bold><Check type="checkbox" defaultChecked />{f}</CheckRow>
      ))}
      <MoreTables href="#">更多表格...</MoreTables>
    </FieldList>
    <AreasTitle>在以下区域间拖动字段:</AreasTitle>
    <Areas>
      <AreaPanel title="筛选器" fields={[]} icon={<Sm w={12} h={12}><path d="M0 0h12v2L8 7v5H4V7L0 2z" fill="#999" /></Sm>} />
      <AreaPanel right title="列" fields={[]} icon={<Sm w={12} h={12}><path d="M1 1h3v10H1zM5 1h1v10H5zM7 1h1v10H7zM9 1h1v10H9z" fill="#999" /></Sm>} />
      <AreaPanel low title="行" fields={["班级", "科目"]} icon={<Sm w={12} h={12}><path d="M1 1h10v3H1zM1 5h10v1H1zM1 7h10v1H1zM1 9h10v1H1z" fill="#999" /></Sm>} />
      <AreaPanel low right title="值" fields={["平均值项:平均..."]} icon={<Sm w={12} h={12}><path d="M10 3V1.500H2l4 4-4 4h8V8" fill="none" stroke="#999" strokeWidth="1.500" /></Sm>} />
    </Areas>
    <Defer>
      <CheckRow><Check type="checkbox" />推迟布局更新</CheckRow>
      <Update disabled>更新</Update>
    </Defer>
  </Pane>
);

export default function App() {
  return (
    <>
      <GlobalStyle />
      <Window>
        <Header>
          <Title>工作簿3.xlsx - Excel</Title>
          <ContextTitle>数据透视表工具</ContextTitle>
          <WindowControls>
            <WindowButton aria-label="功能区显示选项"><Sm w={13} h={10}><path d="M.5.5h12v9H.5zM0 2.500h13M6.500 8V4M4.500 6l2-2 2 2" fill="none" stroke="#fff" /></Sm></WindowButton>
            <WindowButton aria-label="最小化"><Sm w={19} h={10}><path d="M0 6h9v2H0z" fill="#fff" /></Sm></WindowButton>
            <WindowButton aria-label="最大化"><Sm w={20} h={10}><path d="M.5.5h9v9H.5z" fill="none" stroke="#fff" /><path d="M0 0h10v3H0z" fill="#fff" /></Sm></WindowButton>
            <WindowButton aria-label="关闭"><Sm w={10} h={10}><path d="M1 1l8 8M9 1L1 9" stroke="#fff" strokeWidth="2" /></Sm></WindowButton>
          </WindowControls>
          <Tabs>
            <Tab $file>文件</Tab>
            {mainTabs.map((t) => <Tab key={t}>{t}</Tab>)}
          </Tabs>
          <ContextTabs>
            <ContextTab $active>分析</ContextTab>
            <ContextTab>设计</ContextTab>
          </ContextTabs>
          <HeaderEnd>
            <TellMe>
              <Sm w={10} h={14}><path d="M3 9.500Q.8 7.500.8 5a4.200 4.200 0 0 1 8.400 0Q9.200 7.500 7 9.500V11H3zM3 13h4" fill="none" stroke="#a6c7b4" strokeWidth="1.400" /></Sm>
              告诉我您想要做什么...
            </TellMe>
            <Account>
              <SignIn>登录</SignIn>
              <Share>
                <Sm><circle cx="7.500" cy="5" r="4.200" fill="none" stroke="#fff" strokeWidth="1.400" /><path d="M1 16q0-6 4.500-7M9.500 8.500l2 2M12.500 10v6M9.500 13h6" fill="none" stroke="#fff" strokeWidth="1.400" /></Sm>
                共享
              </Share>
            </Account>
          </HeaderEnd>
        </Header>

        <Ribbon>
          <Group $w={99}>
            <GroupBody>
              <Stack $w={90}>
                <FieldLabel htmlFor="pivot-name">数据透视表名称:</FieldLabel>
                <RibbonInput id="pivot-name" defaultValue="数据透视表1" />
                <SmallButton>{smallIcons.options}选项<Caret /></SmallButton>
              </Stack>
            </GroupBody>
            <GroupLabel>数据透视表</GroupLabel>
          </Group>
          <Group $w={291}>
            <GroupBody>
              <Stack $w={110}>
                <FieldLabel htmlFor="active-field">活动字段:</FieldLabel>
                <RibbonInput id="active-field" defaultValue="平均值项:平均分" />
                <SmallButton>{smallIcons.settings}字段设置</SmallButton>
              </Stack>
              <Command icon="down" w={52} lines={["向下钻取"]} off />
              <Command icon="up" w={44} lines={["向上钻", "取"]} caret={1} off />
              <Stack $w={76} $drop>
                <SmallButton $off $tall disabled>{smallIcons.expand}展开字段</SmallButton>
                <SmallButton $off $tall disabled>{smallIcons.collapse}折叠字段</SmallButton>
              </Stack>
            </GroupBody>
            <GroupLabel>活动字段</GroupLabel>
          </Group>
          <Group $w={86}>
            <GroupBody>
              <Stack $w={78}>
                <SmallButton $off disabled>{smallIcons.arrow}组选择</SmallButton>
                <SmallButton $off disabled>{smallIcons.ungroup}取消组合</SmallButton>
                <SmallButton $off disabled>{smallIcons.groupfield}组字段</SmallButton>
              </Stack>
            </GroupBody>
            <GroupLabel>分组</GroupLabel>
          </Group>
          {groups.map((g) => (
            <Group key={g.label} $w={g.w}>
              <GroupBody>{g.items.map((b) => <Command key={b.icon} {...b} />)}</GroupBody>
              <GroupLabel>{g.label}</GroupLabel>
            </Group>
          ))}
          <Collapse aria-label="折叠功能区"><Sm w={9} h={6}><path d="M1 5l3.500-3.500L8 5" fill="none" stroke="#666" strokeWidth="2" /></Sm></Collapse>
        </Ribbon>

        <Quick>
          <QuickButton $w={49} aria-label="保存"><Sm><path d="M1 1h14v14H1z" fill="#8a55a8" /><path d="M3 2h10v6H3zM5 10h6v4H9v-2H7v2H5z" fill="#fff" /></Sm></QuickButton>
          <QuickButton $w={52} aria-label="恢复"><Sm w={17}><path d="M14 5H8Q3 5.500 3 10q1 3 5 4M10 1l4.500 4L10 9" fill="none" stroke="#b9b9b9" strokeWidth="2.200" /></Sm><Caret $c="#c0c0c0" /></QuickButton>
          <QuickButton $w={53} aria-label="撤消"><Sm w={17}><path d="M3 5h6q5 .5 5 5-1 3-5 4M7 1L2.500 5 7 9" fill="none" stroke={BLUE} strokeWidth="2.200" /></Sm><Caret /></QuickButton>
          <QuickButton $w={54} aria-label="快速打印">
            <Sm w={18}>
              <path d="M10 14.500H1.500v-14h6l3 3V6" fill="#fff" stroke="#555" />
              <path d="M3.500 3v9" stroke={BLUE} strokeWidth="1.500" />
              <path d="M6.500 9.500h10v4h-10zM8.500 6.500h5v3h-5zM8.500 12.500h5v3h-5z" fill="#fff" stroke="#555" strokeWidth="1.400" />
            </Sm>
          </QuickButton>
          <QuickButton $w={56} aria-label="打印预览">
            <Sm>
              <path d="M1.500.5h9l3 3v12h-12z" fill="#fff" stroke="#666" />
              <circle cx="7.500" cy="8.500" r="3.500" fill="#fff" stroke="#666" strokeWidth="1.600" />
              <path d="M10 11l4.500 4.500" stroke="#666" strokeWidth="2.400" />
            </Sm>
          </QuickButton>
          <QuickButton $w={20} aria-label="自定义快速访问工具栏"><Caret $c="#f6f6f6" /></QuickButton>
        </Quick>

        <FormulaBar>
          <Boxed $w={124}>
            <NameInput aria-label="名称框" defaultValue="G34" />
            <EndButton aria-label="名称列表"><Caret /></EndButton>
          </Boxed>
          <Dots $w={30}><Sm w={2} h={12}><path d="M0 0h2v2H0zM0 5h2v2H0zM0 10h2v2H0z" fill="#b0b0b0" /></Sm></Dots>
          <FormulaTools $w={110}>
            <button aria-label="取消"><Sm w={12} h={12}><path d="M1 1l10 10M11 1L1 11" stroke="#c0c0c0" strokeWidth="1.800" /></Sm></button>
            <button aria-label="输入"><Sm w={14} h={12}><path d="M1 6l4 4 8-9" fill="none" stroke="#c0c0c0" strokeWidth="2.400" /></Sm></button>
            <button aria-label="插入函数"><Sm w={14} h={16}><Fx x={1} y={12} size={16} /></Sm></button>
          </FormulaTools>
          <Boxed>
            <FormulaInput aria-label="编辑栏" defaultValue="94" />
            <EndButton aria-label="展开编辑栏"><Sm w={9} h={6}><path d="M1 1l3.500 3L8 1" fill="none" stroke="#666" strokeWidth="2" /></Sm></EndButton>
          </Boxed>
        </FormulaBar>

        <Main>
          <Book>
            <SheetRow>
              <Worksheet />
              <VScroll>
                <ScrollButton aria-label="向上"><Sm w={7} h={4}><path d="M0 4h7L3.500 0z" fill="#666" /></Sm></ScrollButton>
                <Space $grow={257} />
                <VThumb />
                <Space $grow={219} />
                <ScrollButton aria-label="向下"><Sm w={7} h={4}><path d="M0 0h7L3.500 4z" fill="#666" /></Sm></ScrollButton>
              </VScroll>
            </SheetRow>
            <TabBar>
              <TabStrip>
                <TabNav>
                  <button aria-label="上一张"><Sm w={5} h={8}><path d="M5 0v8L0 4z" fill="#c0c0c0" /></Sm></button>
                  <button aria-label="下一张"><Sm w={5} h={8}><path d="M0 0v8l5-4z" fill="#c0c0c0" /></Sm></button>
                </TabNav>
                <SheetTab $active>成绩表</SheetTab>
                <SheetTab>员工信息</SheetTab><TabRule />
                <SheetTab>田字格</SheetTab><TabRule />
                <SheetTab $fill="#bdd7ee">XXX公司销售额</SheetTab><TabRule />
                <SheetTab $fill="#f4b084">课程表</SheetTab><TabRule />
                <SheetTab>Sheet5</SheetTab><TabRule />
                <AddSheet aria-label="新工作表"><Sm w={18} h={18}><circle cx="9" cy="9" r="7.500" fill="none" stroke="#777" /><path d="M9 5v8M5 9h8" stroke="#777" strokeWidth="2" /></Sm></AddSheet>
              </TabStrip>
              <Dots $w={30}><Sm w={2} h={10}><path d="M0 0h2v2H0zM0 4h2v2H0zM0 8h2v2H0z" fill="#b0b0b0" /></Sm></Dots>
              <HScroll>
                <ScrollButton aria-label="向左"><Sm w={4} h={7}><path d="M4 0v7L0 3.500z" fill="#666" /></Sm></ScrollButton>
                <HThumb />
                <Space $grow={201} />
                <ScrollButton aria-label="向右"><Sm w={4} h={7}><path d="M0 0v7l4-3.500z" fill="#666" /></Sm></ScrollButton>
              </HScroll>
            </TabBar>
          </Book>
          <FieldPane />
        </Main>

        <Status>
          <StatusLeft>
            <span>就绪</span>
            <span>数字</span>
            <Sm w={14} h={14}>
              <circle cx="3.500" cy="3.500" r="3" fill="#666" />
              <path d="M7 2.500h6.500v11h-12V8" fill="none" stroke="#777" />
              <path d="M7 2h7v3H7z" fill="#777" />
              <path d="M3 8.500h9M3 11.500h9" stroke="#777" strokeDasharray="2 1" />
            </Sm>
          </StatusLeft>
          <StatusRight>
            <ViewButton $on aria-label="普通"><Sm w={14} h={14}><path d="M.5.5h12v12H.5zM4.500 0v13M8.500 0v13M0 4.500h13M0 8.500h13" fill="none" stroke="#666" /></Sm></ViewButton>
            <ViewButton aria-label="页面布局"><Sm w={14} h={14}><path d="M.5.5h13v12H.5zM3.500 2.500h7v8h-7zM5 4.500h4M5 6.500h4M5 8.500h4" fill="none" stroke="#666" /></Sm></ViewButton>
            <ViewButton aria-label="分页预览"><Sm w={14} h={14}><path d="M.5.5h13v12H.5zM.5 8.500h9v-8M5.500.5v8" fill="none" stroke="#666" /></Sm></ViewButton>
            <ZoomButton aria-label="缩小"><Sm w={8} h={8}><path d="M1 3h6v2H1z" fill="#555" /></Sm></ZoomButton>
            <ZoomRange type="range" aria-label="缩放" min={0} max={100} defaultValue={40} />
            <ZoomButton aria-label="放大"><Sm w={8} h={8}><path d="M0 3h8v2H0zM3 0h2v8H3z" fill="#555" /></Sm></ZoomButton>
            <ZoomLevel>80%</ZoomLevel>
          </StatusRight>
        </Status>
        <Watermark>
          <Sm w={42} h={42}>
            <defs>
              <linearGradient id="leaf" x1="0" y1="1" x2="1" y2="0">
                <stop offset="0" stopColor="#e3dc4e" />
                <stop offset=".5" stopColor="#8ccb4e" />
                <stop offset="1" stopColor="#45b05a" />
              </linearGradient>
              <linearGradient id="wave" x1="0" y1="1" x2="1" y2="0">
                <stop offset="0" stopColor="#3a7fc4" />
                <stop offset="1" stopColor="#4cc0e0" />
              </linearGradient>
            </defs>
            <path d="M41 2Q18 1 6 12-3 21 4 30q5 1 6-2-5-6 3-14Q23 5 41 2z" fill="url(#wave)" />
            <path d="M30 12Q17 11 13 21q-2 8 5 10 6 0 7-6-3 3-7 1-2-6 3-9 4-3 9-5z" fill="#4f94d0" />
            <path d="M28 15q8-2 7 5-2 8-10 11-6 3-13 3-4 3-11 6 15 2 27-4 14-8 13-19-3-7-13-2z" fill="url(#leaf)" />
          </Sm>
          <WatermarkText>极光下载站<small>www.xz7.com</small></WatermarkText>
        </Watermark>
      </Window>
    </>
  );
}
